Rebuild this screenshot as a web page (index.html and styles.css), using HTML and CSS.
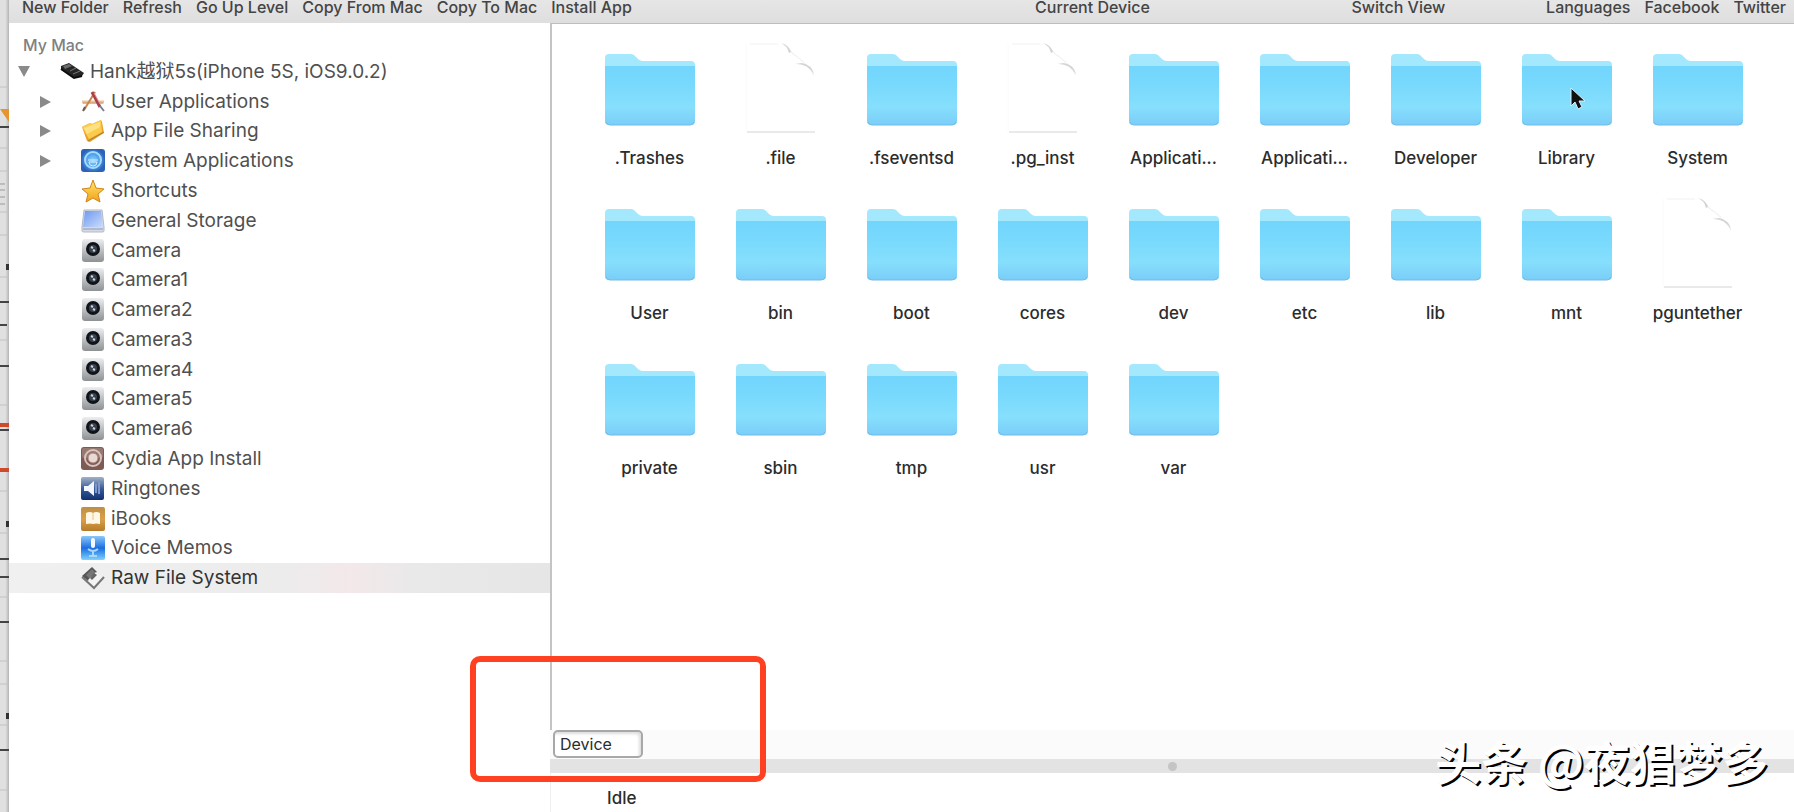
FILE: index.html
```html
<!DOCTYPE html>
<html lang="en">
  <head>
    <meta charset="utf-8">
    <title>Raw File System</title>
    <link rel="stylesheet" href="styles.css">
  </head>

  <body>
    <!-- shared icons -->
    <svg class="defs" width="0" height="0" aria-hidden="true">
      <defs>
        <linearGradient id="g-folder" x1="0" y1="0" x2="0" y2="1">
          <stop offset="0" stop-color="#72d5fc"/>
          <stop offset=".3" stop-color="#78d9fd"/>
          <stop offset=".7" stop-color="#86dffc"/>
          <stop offset="1" stop-color="#7acdf8"/>
        </linearGradient>
        <linearGradient id="g-gray" x1="0" y1="0" x2="0" y2="1">
          <stop offset="0" stop-color="#eceef0"/>
          <stop offset="1" stop-color="#8e9194"/>
        </linearGradient>
        <linearGradient id="g-gold" x1="0" y1="0" x2="0" y2="1">
          <stop offset="0" stop-color="#ffe56a"/>
          <stop offset="1" stop-color="#f2a21c"/>
        </linearGradient>
        <linearGradient id="g-disk" x1="0" y1="0" x2="1" y2="1">
          <stop offset="0" stop-color="#6f98ee"/>
          <stop offset="1" stop-color="#c9dcfd"/>
        </linearGradient>
        <linearGradient id="g-tone" x1="0" y1="0" x2="0" y2="1">
          <stop offset="0" stop-color="#a3b1c6"/>
          <stop offset=".5" stop-color="#3a5c9c"/>
          <stop offset="1" stop-color="#11306e"/>
        </linearGradient>
        <linearGradient id="g-memo" x1="0" y1="0" x2="0" y2="1">
          <stop offset="0" stop-color="#8cc8fa"/>
          <stop offset=".5" stop-color="#1a6ee0"/>
          <stop offset="1" stop-color="#7fd2ff"/>
        </linearGradient>
        <radialGradient id="g-sys">
          <stop offset="0" stop-color="#8fd6ff"/>
          <stop offset=".6" stop-color="#4a9bea"/>
          <stop offset="1" stop-color="#2c63b8"/>
        </radialGradient>
        <linearGradient id="g-book" x1="0" y1="0" x2="0" y2="1">
          <stop offset="0" stop-color="#bd8f45"/>
          <stop offset=".5" stop-color="#dba049"/>
          <stop offset="1" stop-color="#b47c2a"/>
        </linearGradient>
      </defs>

      <symbol id="folder" viewBox="0 0 90 90">
        <path d="M0 15q0-4 4-4h22q3 0 5 3l2 2q2 2 5 2h48q4 0 4 4v20H0z" fill="#a3e8fd"/>
        <path d="M0 23h90v55q0 4-4 4H4q-4 0-4-4z" fill="url(#g-folder)"/>
        <path d="M1 79q1 3 4 3h80q3 0 4-3" fill="none" stroke="#72bce8"/>
      </symbol>
      <symbol id="file" viewBox="0 0 90 90">
        <path d="M10 89V1h35l34 31v57" fill="#fff"/>
        <path d="M10 89V1" stroke="#fafafa" fill="none"/>
        <path d="M14 1h28" stroke="#f1f1f1" fill="none"/>
        <path d="M47 1q8 6 9 9q14 9 22 22" fill="none" stroke="#ececec"/>
        <path d="M45 0q6 2 8 10l2-1q-2-7-10-9zM59 21q12-1 19 10q-2-9-12-11z" fill="#d4d4d4"/>
        <path d="M11 89h68" stroke="#d4d4d4" fill="none"/>
      </symbol>
      <symbol id="phone" viewBox="0 0 24 24">
        <path d="M1 6l8-3 15 10-2 3-8 2L1 9z" fill="#262626"/>
        <path d="M3 6l6-2 3 2-7 3z" fill="#6b6b6b"/>
        <path d="M10 11l6-3M13 14l7-3" stroke="#777" fill="none"/>
        <path d="M1 9l13 9 8-2" stroke="#0d0d0d" stroke-width="2" fill="none"/>
      </symbol>
      <symbol id="apps" viewBox="0 0 24 24">
        <path d="M1 12h22" stroke="#e9c49c" stroke-width="3"/>
        <path d="M2 13h20" stroke="#c99359"/>
        <path d="M14 2L3 20" stroke="#c78750" stroke-width="2"/>
        <path d="M2 21l2-4" stroke="#6a5a52" stroke-width="2"/>
        <path d="M11 2l8 15" stroke="#a8404a" stroke-width="3"/>
        <path d="M19 16l4 5" stroke="#767f91" stroke-width="2"/>
        <path d="M13 3l6 11" stroke="#e59499"/>
      </symbol>
      <symbol id="share" viewBox="0 0 24 24">
        <path d="M1 8l8-4 2 1 9-4 1 2 2 11-14 9-3-1z" fill="#e8a22b"/>
        <path d="M1 8l8-4 2 1 9-4 1 12-13 7z" fill="#fccb4c"/>
        <path d="M3 9l16-6v5L6 15z" fill="#ffe183"/>
        <path d="M7 22l16-9" stroke="#a9802f" fill="none"/>
      </symbol>
      <symbol id="sysapps" viewBox="0 0 24 24">
        <rect width="24" height="23" rx="3" fill="url(#g-sys)"/>
        <circle cx="12" cy="11" r="8" fill="none" stroke="#a5dcfb" stroke-width="2"/>
        <path d="M8 13a4 4 0 0 0 8 0zM7 11h10" fill="none" stroke="#d0eeff"/>
      </symbol>
      <symbol id="star" viewBox="0 0 24 24">
        <path d="M12 1l3 8 8 1-6 5 2 8-7-4-7 4 2-8-6-5 8-1z" fill="url(#g-gold)" stroke="#cf8518"/>
      </symbol>
      <symbol id="disk" viewBox="0 0 24 24">
        <path d="M3 1h18l2 17v4q0 1-2 1H3q-2 0-2-1v-4z" fill="#d5dbe6" stroke="#b3b9c6"/>
        <path d="M4 2h16l2 16H2z" fill="url(#g-disk)"/>
        <path d="M2 20h20" stroke="#8f98aa"/>
      </symbol>
      <symbol id="camera" viewBox="0 0 24 24">
        <rect x="1" width="22" height="23" rx="3" fill="url(#g-gray)"/>
        <circle cx="12" cy="10" r="7" fill="#101318"/>
        <circle cx="12" cy="10" r="4" fill="#39414e"/>
        <path d="M10 8l2 1M12 11l2 1" stroke="#cdd5e0" stroke-width="2" fill="none"/>
      </symbol>
      <symbol id="cydia" viewBox="0 0 24 24">
        <rect width="23" height="23" rx="3" fill="#7d5b54"/>
        <rect x="1" y="1" width="21" height="10" rx="2" fill="#967971"/>
        <circle cx="12" cy="11" r="8" fill="none" stroke="#d9c4bd" stroke-width="2"/>
        <circle cx="12" cy="11" r="5" fill="#e8d9d4" stroke="#a98079"/>
      </symbol>
      <symbol id="ringtone" viewBox="0 0 24 24">
        <rect width="23" height="23" rx="2" fill="url(#g-tone)"/>
        <path d="M3 9h4l6-5v15l-6-5H3z" fill="#f2f6ff"/>
        <path d="M15 7v9M18 5v12" stroke="#7e98cb" stroke-width="2"/>
      </symbol>
      <symbol id="book" viewBox="0 0 24 24">
        <rect width="24" height="24" rx="2" fill="url(#g-book)"/>
        <path d="M5 6q4-2 7 0q3-2 7 0v11q-4-1-7 0q-3-1-7 0z" fill="#fff8e8"/>
        <path d="M12 6v7" stroke="#e6c48d"/>
      </symbol>
      <symbol id="memo" viewBox="0 0 24 24">
        <rect width="24" height="24" rx="2" fill="url(#g-memo)"/>
        <rect x="10" y="2" width="4" height="10" rx="2" fill="#f2faff"/>
        <path d="M7 13q5 4 10 0M12 15v5M8 20h8" stroke="#a9d8fb" stroke-width="2" fill="none"/>
      </symbol>
      <symbol id="raw" viewBox="0 0 24 24">
        <path d="M1 10L11 1l5 5-9 9z" fill="#555"/>
        <path d="M5 9l6-6 4 4-6 6z" fill="#777"/>
        <path d="M7 14l8-8 7 6-9 10z" fill="#f4f4f4"/>
        <path d="M1 11l12 11 10-11" stroke="#777" stroke-width="2" fill="none"/>
        <path d="M9 12l4-5 3 2-5 5z" fill="#666"/>
      </symbol>
    </svg>

    <!-- sliver of the window behind -->
    <svg class="behind" width="9" height="812" aria-hidden="true">
      <path d="M0 87h9M0 148h9M0 171h9M0 212h9M0 235h9M0 277h9M0 340h9M0 405h9M0 491h9M0 533h9M0 597h9M0 661h9M0 684h9M0 725h9M0 790h9" stroke="#c2c2c2"/>
      <path d="M0 184h5M0 190h5M0 197h5M0 204h5" stroke="#999"/>
      <path d="M0 109h9v13z" fill="#e5952c"/>
      <path d="M0 127h9M0 302h9M0 325h7M0 366h9M0 430h9M0 559h9M0 577h9M0 622h9M0 750h9" stroke="#444" stroke-width="2"/>
      <path d="M0 425h9M0 470h9" stroke="#cf4a2c" stroke-width="4"/>
      <path d="M6 264h3v6H6zM6 521h3v6H6zM6 713h3v6H6z" fill="#333"/>
    </svg>

    <div class="window">
      <header class="toolbar">
        <div class="tools">
          <button>New Folder</button>
          <button>Refresh</button>
          <button>Go Up Level</button>
          <button>Copy From Mac</button>
          <button>Copy To Mac</button>
          <button>Install App</button>
        </div>
        <span class="space wide"></span>
        <button>Current Device</button>
        <span class="space medium"></span>
        <button>Switch View</button>
        <span class="space"></span>
        <div class="tools">
          <button>Languages</button>
          <button>Facebook</button>
          <button>Twitter</button>
        </div>
      </header>

      <div class="panes">
        <nav class="sidebar">
          <h2>My Mac</h2>
          <ul class="tree">
            <li class="root"><span class="arrow open"></span><svg><use href="#phone"/></svg><a href="#">Hank越狱5s(iPhone 5S, iOS9.0.2)</a></li>
            <li><span class="arrow"></span><svg><use href="#apps"/></svg><a href="#">User Applications</a></li>
            <li><span class="arrow"></span><svg><use href="#share"/></svg><a href="#">App File Sharing</a></li>
            <li><span class="arrow"></span><svg><use href="#sysapps"/></svg><a href="#">System Applications</a></li>
            <li><svg><use href="#star"/></svg><a href="#">Shortcuts</a></li>
            <li><svg><use href="#disk"/></svg><a href="#">General Storage</a></li>
            <li><svg><use href="#camera"/></svg><a href="#">Camera</a></li>
            <li><svg><use href="#camera"/></svg><a href="#">Camera1</a></li>
            <li><svg><use href="#camera"/></svg><a href="#">Camera2</a></li>
            <li><svg><use href="#camera"/></svg><a href="#">Camera3</a></li>
            <li><svg><use href="#camera"/></svg><a href="#">Camera4</a></li>
            <li><svg><use href="#camera"/></svg><a href="#">Camera5</a></li>
            <li><svg><use href="#camera"/></svg><a href="#">Camera6</a></li>
            <li><svg><use href="#cydia"/></svg><a href="#">Cydia App Install</a></li>
            <li><svg><use href="#ringtone"/></svg><a href="#">Ringtones</a></li>
            <li><svg><use href="#book"/></svg><a href="#">iBooks</a></li>
            <li><svg><use href="#memo"/></svg><a href="#">Voice Memos</a></li>
            <li class="selected"><svg><use href="#raw"/></svg><a href="#">Raw File System</a></li>
          </ul>
        </nav>

        <main class="content">
          <ul class="files">
            <li><svg><use href="#folder"/></svg><a href="#">.Trashes</a></li>
            <li><svg><use href="#file"/></svg><a href="#">.file</a></li>
            <li><svg><use href="#folder"/></svg><a href="#">.fseventsd</a></li>
            <li><svg><use href="#file"/></svg><a href="#">.pg_inst</a></li>
            <li><svg><use href="#folder"/></svg><a href="#">Applicati...</a></li>
            <li><svg><use href="#folder"/></svg><a href="#">Applicati...</a></li>
            <li><svg><use href="#folder"/></svg><a href="#">Developer</a></li>
            <li>
              <svg><use href="#folder"/></svg><a href="#">Library</a>
              <svg class="pointer" viewBox="0 0 16 24"><path d="M1 1v18l4-4 3 7 4-2-3-6h6z" fill="#111" stroke="#d9f4ff"/></svg>
            </li>
            <li><svg><use href="#folder"/></svg><a href="#">System</a></li>
            <li><svg><use href="#folder"/></svg><a href="#">User</a></li>
            <li><svg><use href="#folder"/></svg><a href="#">bin</a></li>
            <li><svg><use href="#folder"/></svg><a href="#">boot</a></li>
            <li><svg><use href="#folder"/></svg><a href="#">cores</a></li>
            <li><svg><use href="#folder"/></svg><a href="#">dev</a></li>
            <li><svg><use href="#folder"/></svg><a href="#">etc</a></li>
            <li><svg><use href="#folder"/></svg><a href="#">lib</a></li>
            <li><svg><use href="#folder"/></svg><a href="#">mnt</a></li>
            <li><svg><use href="#file"/></svg><a href="#">pguntether</a></li>
            <li><svg><use href="#folder"/></svg><a href="#">private</a></li>
            <li><svg><use href="#folder"/></svg><a href="#">sbin</a></li>
            <li><svg><use href="#folder"/></svg><a href="#">tmp</a></li>
            <li><svg><use href="#folder"/></svg><a href="#">usr</a></li>
            <li><svg><use href="#folder"/></svg><a href="#">var</a></li>
          </ul>
          <div class="pathbar"><button>Device</button></div>
          <div class="splitter"><span class="grip"></span></div>
          <footer class="status">Idle</footer>
        </main>
      </div>
    </div>

    <div class="highlight"></div>
    <div class="watermark" lang="zh">头条 @夜猖梦多</div>
  </body>
</html>
```
FILE: styles.css
```css
* {
  box-sizing: border-box;
}
body {
  margin: 0;
  height: 100vh;
  display: flex;
  position: relative;
  overflow: hidden;
  background: #fff;
  color: #2c2c2c;
  font-family: Inter, "Noto Sans CJK SC", sans-serif;
}
ul {
  list-style: none;
  margin: 0;
  padding: 0;
}
a {
  color: inherit;
  text-decoration: none;
}
button {
  font: inherit;
  color: inherit;
  border: 0;
  padding: 0;
  background: none;
}
.defs {
  position: absolute;
}
.behind {
  flex: none;
  background: linear-gradient(90deg, #e0e0e0 60%, #b4b4b4);
}
.window {
  flex: 1;
  min-width: 0;
  display: flex;
  flex-direction: column;
}

/* toolbar */
.toolbar {
  flex: none;
  height: 23px;
  padding: 0 8px 0 13px;
  display: flex;
  background: linear-gradient(#e6e6e6, #dedede);
  color: #444;
  font-size: 16px;
  font-weight: 500;
  line-height: 15px;
  white-space: nowrap;
}
.toolbar button {
  height: 15px;
}
.tools {
  display: flex;
  gap: 14px;
}
.space {
  flex: 1;
}
.space.medium {
  flex: 2;
}
.space.wide {
  flex: 4;
}

.panes {
  flex: 1;
  min-height: 0;
  display: flex;
}

/* sidebar */
.sidebar {
  flex: none;
  width: 541px;
  color: #505050;
  font-size: 19px;
}
.sidebar h2 {
  margin: 0;
  padding: 10px 14px 0;
  color: #808080;
  font-size: 16px;
  font-weight: 500;
  line-height: 24px;
}
.tree {
  display: grid;
  grid-auto-rows: 1fr;
  min-height: 536px;
}
.tree li {
  padding-left: 72px;
  display: flex;
  align-items: center;
  gap: 6px;
  position: relative;
  line-height: 24px;
}
.tree .root {
  padding-left: 51px;
}
.tree svg {
  width: 24px;
  height: 24px;
}
.tree .selected {
  background: linear-gradient(90deg, #f0f0f0, #ececec 50%, #f3e8ea 63%, #e9e9e9 75%, #e6e6e6);
  color: #333;
}
.arrow {
  position: absolute;
  left: 31px;
  border-left: 11px solid #8a8a8a;
  border-top: 6px solid transparent;
  border-bottom: 6px solid transparent;
}
.arrow.open {
  left: 9px;
  border-top: 11px solid #8a8a8a;
  border-left: 6px solid transparent;
  border-right: 6px solid transparent;
  border-bottom: 0;
}

/* file icons */
.content {
  flex: 1;
  min-width: 0;
  display: flex;
  flex-direction: column;
}
.files {
  flex: 1;
  padding: 19px 0 0 32px;
  display: grid;
  grid-template-columns: repeat(auto-fill, 131px);
  grid-auto-rows: 155px;
  border-top: 1px solid #bdbdbd;
  border-left: 2px solid #c4c4c4;
  font-size: 17px;
  font-weight: 500;
}
.files li {
  display: flex;
  flex-direction: column;
  align-items: center;
  gap: 15px;
  line-height: 20px;
  position: relative;
}
.files svg {
  width: 90px;
  height: 90px;
}
.files .pointer {
  position: absolute;
  left: 69px;
  top: 44px;
  width: 16px;
  height: 24px;
}

.pathbar {
  flex: none;
  padding: 0 3px 1px;
  background: #fbfbfb;
}
.pathbar button {
  display: block;
  width: 90px;
  height: 28px;
  padding-left: 5px;
  border: 2px solid #a8a8a8;
  border-radius: 5px;
  background: #fff;
  box-shadow: inset -2px 2px 3px #ddd;
  font-size: 16px;
  text-align: left;
}
.splitter {
  flex: none;
  height: 14px;
  display: flex;
  align-items: center;
  justify-content: center;
  background: #e3e3e3;
}
.grip {
  width: 9px;
  height: 9px;
  border-radius: 50%;
  background: #c4c4c4;
}
.status {
  flex: none;
  height: 39px;
  padding: 13px 56px;
  border-left: 1px solid #eee;
  font-size: 17px;
  font-weight: 500;
  line-height: 24px;
}

/* laid over the window */
.highlight {
  position: absolute;
  left: 470px;
  top: 656px;
  width: 296px;
  height: 126px;
  border: 6px solid #ff4122;
  border-radius: 10px;
}
.watermark {
  position: absolute;
  right: 26px;
  bottom: 18px;
  color: #fff;
  font-family: "Noto Sans CJK SC", sans-serif;
  font-size: 46px;
  font-weight: 700;
  line-height: 68px;
  text-shadow: 2px 2px 0 #000;
}
```
